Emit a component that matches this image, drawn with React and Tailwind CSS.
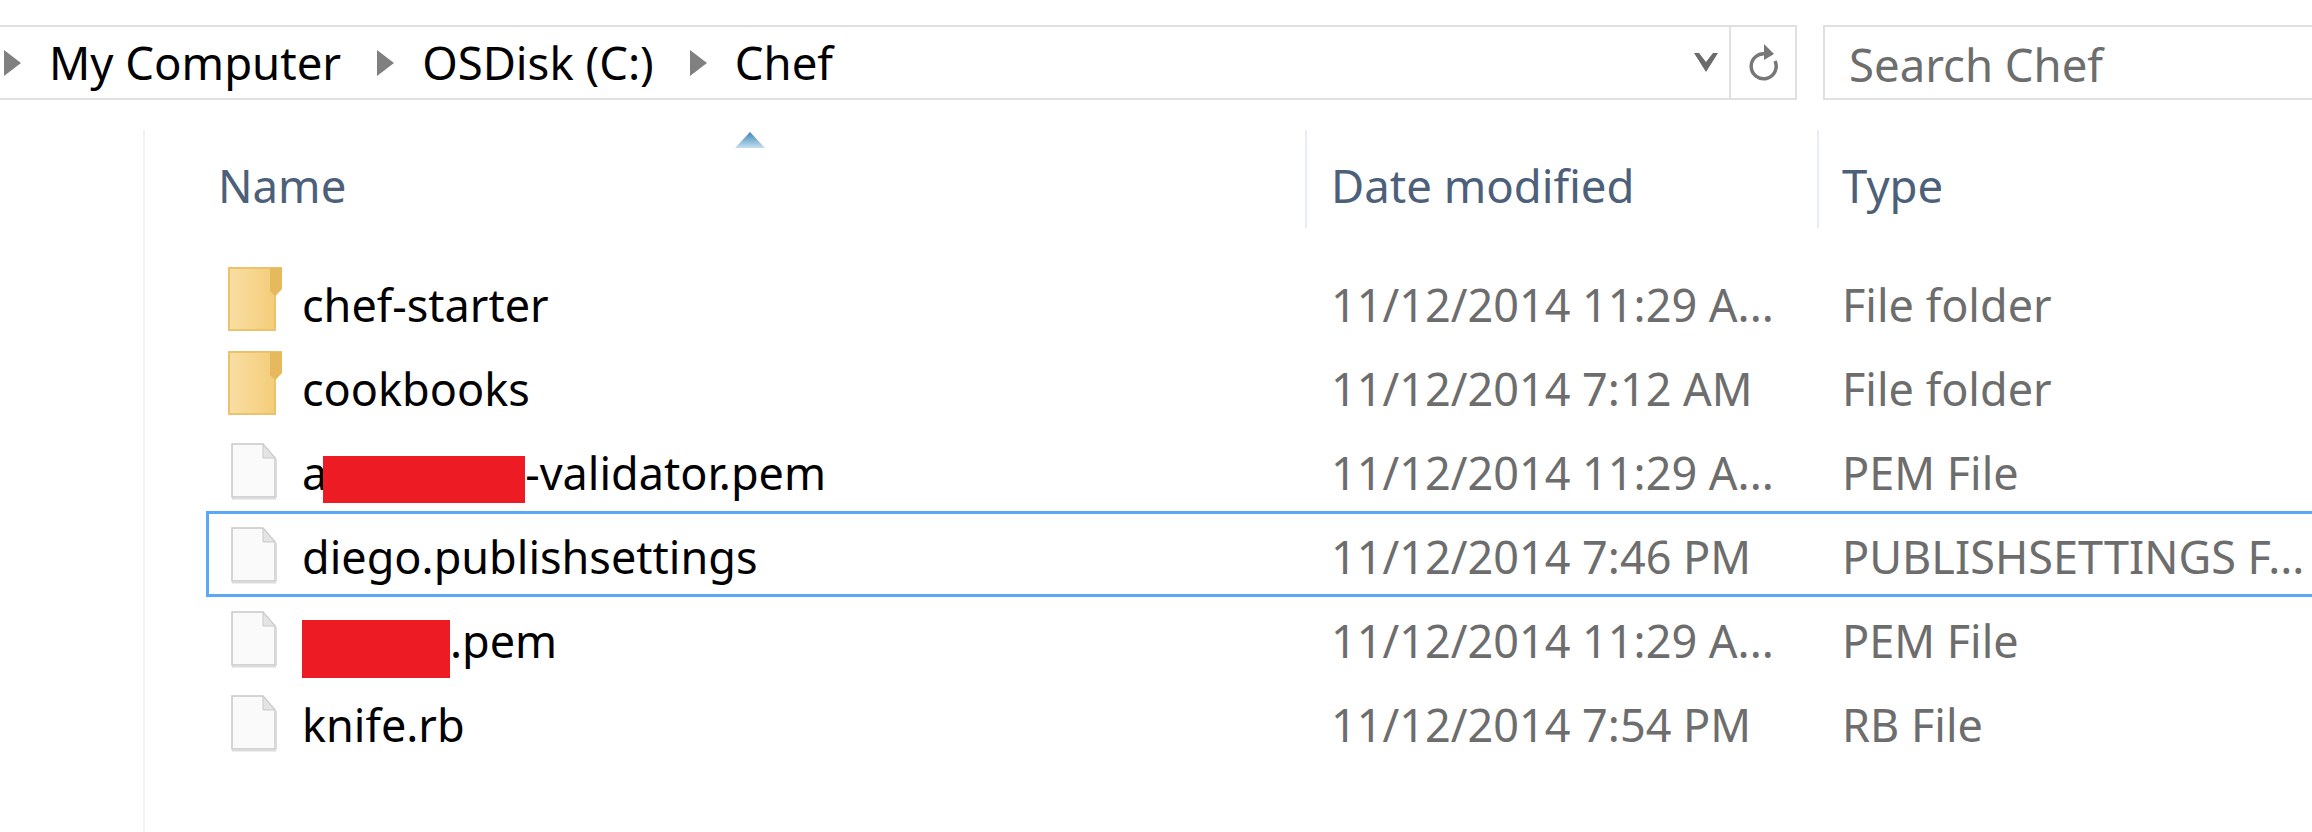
const rows = [
  { kind: 'folder', name: 'chef-starter', date: '11/12/2014 11:29 A...', type: 'File folder' },
  { kind: 'folder', name: 'cookbooks', date: '11/12/2014 7:12 AM', type: 'File folder' },
  { kind: 'file', prefix: 'a', redactW: 'w-[202px] -ml-[4px]', redactBox: 'h-[47px] -bottom-[13px]', name: '-validator.pem', date: '11/12/2014 11:29 A...', type: 'PEM File' },
  { kind: 'file', name: 'diego.publishsettings', date: '11/12/2014 7:46 PM', type: 'PUBLISHSETTINGS F...', focused: true },
  { kind: 'file', redactW: 'w-[148px]', redactBox: 'h-[58px] -bottom-[20px]', name: '.pem', date: '11/12/2014 11:29 A...', type: 'PEM File' },
  { kind: 'file', name: 'knife.rb', date: '11/12/2014 7:54 PM', type: 'RB File' },
]

const Crumb = () => (
  <svg width="17" height="26" viewBox="0 0 17 26" className="shrink-0">
    <path d="M0 0 L17 13 L0 26 Z" fill="#808080" />
  </svg>
)

const FolderIcon = () => (
  <svg width="54" height="64" viewBox="0 0 54 64" className="shrink-0 translate-x-[1px] -translate-y-[3px]">
    <defs>
      <linearGradient id="folderFill" x1="0" x2="1" y1="0" y2="0">
        <stop offset="0" stopColor="#f9dfa4" />
        <stop offset="1" stopColor="#f3ca74" />
      </linearGradient>
    </defs>
    <path d="M1 1 H53 V21 L47 28 V63 H1 Z" fill="url(#folderFill)" stroke="#ecc26c" strokeWidth="2" />
    <path d="M42 1 H54 V22 L47 29 L42 24 Z" fill="#e5b95c" />
  </svg>
)

const FileIcon = () => (
  <svg width="48" height="57" viewBox="0 0 48 57" className="shrink-0 translate-y-[1px]">
    <path d="M2 1 H33 L45 15 V54 H2 Z" fill="#fafafa" stroke="#c8c8c8" strokeWidth="1.5" />
    <path d="M33 1 V15 H45 Z" fill="#e4e4e4" stroke="#c8c8c8" strokeWidth="1" />
    <path d="M2 55.5 H46 M46 16 V55" stroke="#dcdcdc" strokeWidth="2" fill="none" />
  </svg>
)

const Row = ({ row }) => (
  <div
    className={`flex h-[84px] w-[2400px] items-center text-[45px] leading-[84px] ${
      row.focused ? 'outline-[3px] -outline-offset-2 outline-[#5ba8f7]' : ''
    }`}
  >
    <div className="flex w-[1124px] items-center">
      <div className="flex w-[95px] justify-center pl-[1px] pr-[3px]">
        {row.kind === 'folder' ? <FolderIcon /> : <FileIcon />}
      </div>
      <span className="translate-y-[3px] whitespace-nowrap text-black">
        {row.prefix}
        {row.redactW && (
          <span className={`relative inline-block h-0 ${row.redactW}`}>
            <span className={`absolute left-0 w-full bg-[#ed1c24] ${row.redactBox}`} />
          </span>
        )}
        {row.name}
      </span>
    </div>
    <div className="w-[511px] translate-y-[3px] whitespace-nowrap text-[#6d6d6d]">{row.date}</div>
    <div className="translate-y-[3px] whitespace-nowrap text-[#6d6d6d]">{row.type}</div>
  </div>
)

export default function App() {
  return (
    <div className="h-[832px] w-[2312px] overflow-hidden bg-white pt-[25px] font-['Noto_Sans','Open_Sans',sans-serif]">
      {/* Address and search bars */}
      <div className="flex h-[75px] gap-[26px]">
        <div className="flex w-[1797px] items-center border-y-2 border-r-2 border-[#e0e0e0] pl-1 text-[45.5px] text-black">
          <Crumb />
          <span className="ml-[28px]">My Computer</span>
          <div className="ml-[36px]"><Crumb /></div>
          <span className="ml-[28px]">OSDisk (C:)</span>
          <div className="ml-[36px]"><Crumb /></div>
          <span className="ml-[28px]">Chef</span>
          <svg width="24" height="19" viewBox="0 0 24 19" className="ml-auto mr-[11px]">
            <path d="M0 0 L5 0 L12 9 L19 0 L24 0 L12 19 Z" fill="#6b6b6b" />
          </svg>
          <div className="flex h-full w-[66px] items-center justify-center border-l-2 border-[#e0e0e0]">
            <svg width="32" height="38" viewBox="0 0 32 38">
              <path d="M19 10 A12.5 12.5 0 1 0 28 17" fill="none" stroke="#777777" strokeWidth="3.5" />
              <path d="M17 0 L27 10 L17 16 Z" fill="#777777" />
            </svg>
          </div>
        </div>
        <div className="flex flex-1 items-center border-y-2 border-l-2 border-[#e0e0e0] pl-[24px] text-[45.5px] text-[#6d6d6d]">
          <span className="translate-y-[2px]">Search Chef</span>
        </div>
      </div>

      {/* Details list */}
      <div className="ml-[143px] mt-[30px] h-[702px] border-l-2 border-[#f2f2f2]">
        <div className="flex h-[98px] items-center text-[45.5px] text-[#4c607a]">
          <div className="relative flex h-full w-[1160px] items-center pl-[73px]">
            <span className="translate-y-[6px]">Name</span>
            <svg width="30" height="16" viewBox="0 0 30 16" className="absolute left-[590px] top-[2px]">
              <defs>
                <linearGradient id="sortFill" x1="0" x2="0" y1="0" y2="1">
                  <stop offset="0" stopColor="#3e85b4" />
                  <stop offset="1" stopColor="#c3e0f0" />
                </linearGradient>
              </defs>
              <path d="M15 0 L30 16 H0 Z" fill="url(#sortFill)" />
            </svg>
          </div>
          <div className="flex h-full w-[512px] items-center border-l-2 border-[#e6edf6] pl-[24px]">
            <span className="translate-y-[6px]">Date modified</span>
          </div>
          <div className="flex h-full items-center border-l-2 border-[#e6edf6] pl-[23px]">
            <span className="translate-y-[6px]">Type</span>
          </div>
        </div>
        <div className="ml-[62px] mt-[32px]">
          {rows.map((row, i) => <Row key={i} row={row} />)}
        </div>
      </div>
    </div>
  )
}
